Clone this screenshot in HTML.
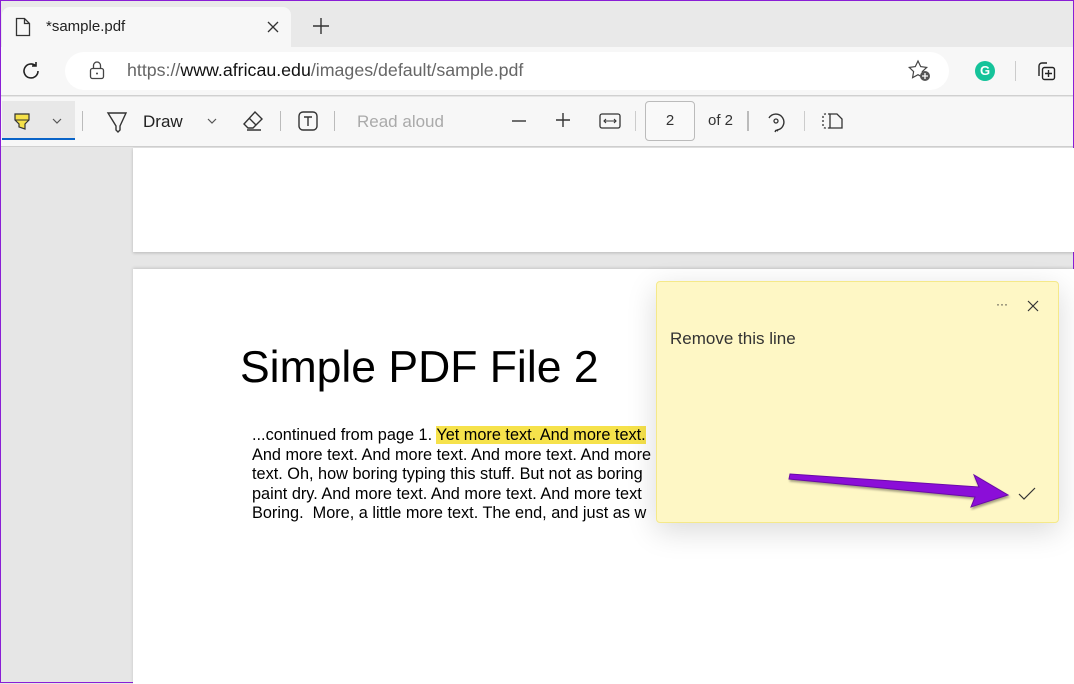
<!DOCTYPE html>
<html><head><style>
*{margin:0;padding:0;box-sizing:border-box}
body{width:1074px;height:683px;overflow:hidden;font-family:"Liberation Sans",sans-serif;background:#e6e6e6;position:relative;border:1px solid #8a1ed6}
.abs{position:absolute}
</style></head><body>
<div class="abs" style="left:0;top:0;width:1072px;height:46px;background:#e9e9e9"></div>
<div class="abs" style="left:1px;top:6px;width:289px;height:42px;background:#f7f7f7;border-radius:8px 8px 0 0"></div>
<svg class="abs" style="left:14px;top:16px" width="16" height="20"><path d="M1.5 1.5h8l5 5v12h-13z M9.5 1.5v5h5" fill="none" stroke="#333" stroke-width="1.3"/></svg>
<div class="abs" style="left:45px;top:17px;font-size:15px;color:#222">*sample.pdf</div>
<svg class="abs" style="left:265px;top:19px" width="14" height="14"><path d="M2 2l10 10M12 2L2 12" stroke="#333" stroke-width="1.3"/></svg>
<svg class="abs" style="left:310px;top:15px" width="20" height="20"><path d="M10 2v16M2 10h16" stroke="#333" stroke-width="1.4"/></svg>
<div class="abs" style="left:0;top:46px;width:1072px;height:49px;background:#f7f7f7;border-bottom:1px solid #d0d0d0"></div>
<div class="abs" style="left:64px;top:51px;width:884px;height:38px;background:#fff;border-radius:19px"></div>
<svg class="abs" style="left:18px;top:58px" width="24" height="24"><path d="M19 12a7 7 0 1 1-2.5-5.4M17 3v4h-4" fill="none" stroke="#222" stroke-width="1.6"/></svg>
<svg class="abs" style="left:87px;top:59px" width="18" height="20"><rect x="2.5" y="8.5" width="13" height="10" rx="2" fill="none" stroke="#444" stroke-width="1.3"/><path d="M5.5 8.5v-3a3.5 3.5 0 0 1 7 0v3" fill="none" stroke="#444" stroke-width="1.3"/><circle cx="9" cy="13.5" r="1" fill="#444"/></svg>
<div class="abs" style="left:126px;top:59px;font-size:17.8px;color:#666">https://<span style="color:#111">www.africau.edu</span>/images/default/sample.pdf</div>
<svg class="abs" style="left:906px;top:58px" width="26" height="24"><path d="M11 2l2.7 5.6 6 .8-4.4 4.2 1 6L11 15.7 5.6 18.6l1-6L2.3 8.4l6-.8z" fill="none" stroke="#444" stroke-width="1.2"/><circle cx="18" cy="17" r="5" fill="#555"/><path d="M18 14v6M15 17h6" stroke="#fff" stroke-width="1.3"/></svg>
<div class="abs" style="left:974px;top:60px;width:20px;height:20px;border-radius:50%;background:#15c39a;color:#fff;font-size:13px;font-weight:bold;text-align:center;line-height:20px">G</div>
<div class="abs" style="left:1014px;top:60px;width:1px;height:20px;background:#ccc"></div>
<svg class="abs" style="left:1034px;top:59px" width="22" height="22"><path d="M4 16V6a3 3 0 0 1 3-3h5" fill="none" stroke="#222" stroke-width="1.4"/><rect x="7.5" y="7.5" width="12" height="12" rx="2" fill="none" stroke="#222" stroke-width="1.4"/><path d="M13.5 10v7M10 13.5h7" stroke="#222" stroke-width="1.4"/></svg>
<div class="abs" style="left:0;top:96px;width:1072px;height:50px;background:#f7f7f7;border-bottom:1px solid #d0d0d0"></div>
<div class="abs" style="left:1px;top:100px;width:73px;height:39px;background:#e8e8e8;border-bottom:2px solid #0a64c8"></div>
<svg class="abs" style="left:11px;top:110px" width="20" height="20"><path d="M3 3h14v6l-4 4v5l-6-2v-3L3 9z" fill="#f5e14a" stroke="#333" stroke-width="1.2"/><path d="M3 9h14" stroke="#333"/></svg>
<svg class="abs" style="left:50px;top:116px" width="12" height="8"><path d="M2 2l4 4 4-4" fill="none" stroke="#555" stroke-width="1.2"/></svg>
<div class="abs" style="left:81px;top:110px;width:1px;height:20px;background:#bbb"></div>
<svg class="abs" style="left:105px;top:109px" width="22" height="24"><path d="M2 3h18l-6 13v4l-2 2-2-2v-4z" fill="none" stroke="#333" stroke-width="1.4"/></svg>
<div class="abs" style="left:142px;top:111px;font-size:17px;color:#222">Draw</div>
<svg class="abs" style="left:205px;top:116px" width="12" height="8"><path d="M2 2l4 4 4-4" fill="none" stroke="#555" stroke-width="1.2"/></svg>
<svg class="abs" style="left:240px;top:108px" width="24" height="24"><path d="M14 3l7 7-9 9H7l-4-4z M8 9l7 7 M6 21h14" fill="none" stroke="#333" stroke-width="1.4"/></svg>
<div class="abs" style="left:279px;top:110px;width:1px;height:20px;background:#bbb"></div>
<svg class="abs" style="left:296px;top:109px" width="22" height="22"><rect x="2" y="2" width="18" height="18" rx="4" fill="none" stroke="#333" stroke-width="1.4"/><path d="M7 7h8M11 7v9" stroke="#333" stroke-width="1.4"/></svg>
<div class="abs" style="left:333px;top:110px;width:1px;height:20px;background:#bbb"></div>
<div class="abs" style="left:356px;top:111px;font-size:17px;color:#aaa">Read aloud</div>
<svg class="abs" style="left:509px;top:111px" width="18" height="18"><path d="M2 9h14" stroke="#333" stroke-width="1.4"/></svg>
<svg class="abs" style="left:553px;top:110px" width="18" height="18"><path d="M2 9h14M9 2v14" stroke="#333" stroke-width="1.4"/></svg>
<svg class="abs" style="left:597px;top:110px" width="24" height="20"><rect x="2" y="3" width="20" height="14" rx="2" fill="none" stroke="#333" stroke-width="1.3"/><path d="M6 10h12M8 8l-2 2 2 2M16 8l2 2-2 2" fill="none" stroke="#333" stroke-width="1.1"/></svg>
<div class="abs" style="left:634px;top:110px;width:1px;height:20px;background:#ccc"></div>
<div class="abs" style="left:644px;top:100px;width:50px;height:40px;border:1px solid #bbb;border-radius:4px;background:#f9f9f9;text-align:center;line-height:38px;font-size:15px;color:#333">2</div>
<div class="abs" style="left:707px;top:111px;font-size:15px;color:#333">of 2</div>
<div class="abs" style="left:746px;top:110px;width:2px;height:20px;background:#bbb"></div>
<svg class="abs" style="left:763px;top:108px" width="24" height="24"><path d="M5 9a8 8 0 1 1 8 12 M12 21l-1 2M12 21l2 1" fill="none" stroke="#333" stroke-width="1.4"/><circle cx="12" cy="12" r="2" fill="none" stroke="#333" stroke-width="1.3"/></svg>
<div class="abs" style="left:803px;top:110px;width:1px;height:20px;background:#ccc"></div>
<svg class="abs" style="left:820px;top:110px" width="24" height="20"><path d="M9 3H4a2 2 0 0 0-2 2v10a2 2 0 0 0 2 2h5" fill="none" stroke="#333" stroke-width="1.3" stroke-dasharray="2 2"/><path d="M9 3h7l5 5v9H9z" fill="none" stroke="#333" stroke-width="1.3"/></svg>
<div class="abs" style="left:132px;top:147px;width:941px;height:104px;background:#fff;box-shadow:0 1px 3px rgba(0,0,0,.2)"></div>
<div class="abs" style="left:132px;top:268px;width:941px;height:415px;background:#fff;box-shadow:0 -1px 3px rgba(0,0,0,.15)"></div>
<div class="abs" style="left:239px;top:342px;font-size:44.5px;color:#000">Simple PDF File 2</div>
<div class="abs" style="left:251px;top:425px;font-size:16.3px;line-height:19.6px;color:#000;white-space:pre">...continued from page 1. <span style="background:#f6e24b">Yet more text. And more text.</span>
And more text. And more text. And more text. And more
text. Oh, how boring typing this stuff. But not as boring
paint dry. And more text. And more text. And more text
Boring.  More, a little more text. The end, and just as w</div>
<div class="abs" style="left:655px;top:280px;width:403px;height:242px;background:#fef7c5;border:1px solid #f5e98a;border-radius:4px;box-shadow:0 8px 30px rgba(0,0,0,.15)"></div>
<div class="abs" style="left:995px;top:296px;font-size:12px;color:#333">···</div>
<svg class="abs" style="left:1025px;top:298px" width="14" height="14"><path d="M2 2l10 10M12 2L2 12" stroke="#333" stroke-width="1.2"/></svg>
<div class="abs" style="left:669px;top:328px;font-size:17px;color:#333">Remove this line</div>
<svg class="abs" style="left:1017px;top:486px" width="18" height="14"><path d="M1 7l5 5 11-11" fill="none" stroke="#333" stroke-width="1.2"/></svg>
<svg class="abs" style="left:780px;top:465px" width="240" height="45"><path d="M9 8L198 21l-5-12 34 20-37 12 4-10L8 13z" fill="#8b0ed8" stroke="#6a0aa8" stroke-width="1" style="filter:drop-shadow(1px 2px 1px rgba(0,0,0,.35))"/></svg>
</body></html>
